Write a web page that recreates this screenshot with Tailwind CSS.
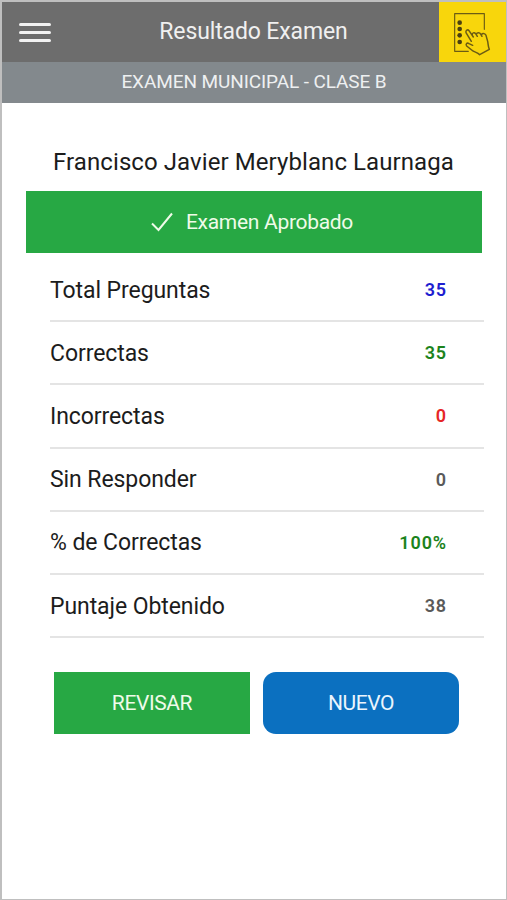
<!DOCTYPE html>
<html lang="es">
<head>
  <meta charset="UTF-8" />
  <meta name="viewport" content="width=device-width, initial-scale=1.0" />
  <title>Resultado Examen</title>
  <script src="https://cdn.jsdelivr.net/npm/@tailwindcss/browser@4"></script>
  <style>
    body {
      font-family: Roboto, 'Liberation Sans', sans-serif;
    }
  </style>
</head>
<body class="bg-white text-[#1c1c1c]">
  <div class="flex flex-col h-[900px] w-[507px] overflow-hidden border-t-2 border-l-2 border-r border-b border-[#bfbfbf]">
    <header class="flex h-[60px] shrink-0 items-center bg-[#6d6d6d]">
      <button class="ml-[17px] flex w-8 flex-col gap-[5px]" aria-label="Menú">
        <span class="h-[3px] w-full rounded-sm bg-[#f2f2f2]"></span>
        <span class="h-[3px] w-full rounded-sm bg-[#f2f2f2]"></span>
        <span class="h-[3px] w-full rounded-sm bg-[#f2f2f2]"></span>
      </button>
      <h1 class="flex-1 pb-0.5 pl-[17px] text-center text-[23px] leading-none tracking-[-0.13px] text-[#f0f0f0]">Resultado Examen</h1>
      <div class="h-full w-[67px] bg-[#f8d60c]">
        <svg class="h-full w-full" viewBox="36 6 201 180" fill="none" stroke="#6b5c14" stroke-width="3.5" stroke-linecap="round" stroke-linejoin="round">
          <path d="M172 88V41H83V154H124" />
          <g fill="#4a400f" stroke="none">
            <circle cx="98" cy="68" r="7" />
            <circle cx="98" cy="87" r="7" />
            <circle cx="98" cy="106" r="7" />
            <circle cx="98" cy="126" r="7" />
          </g>
          <path stroke-width="4.5" d="M133 124L117 98C115 91 122 87 126 92L139 111M136 106C134 98 142 96 146 101L151 109M148 103C150 97 158 97 161 102L165 109M163 104C168 98 175 101 177 106L182 124C184 134 183 139 187 148L158 164C151 156 142 157 134 150L119 138C115 132 120 127 126 131L137 136" />
        </svg>
      </div>
    </header>
    <div class="flex h-[41px] shrink-0 items-center justify-center bg-[#83898d] pb-0.5 text-[19px] leading-none tracking-[-0.1px] text-[#eef0f1]">
      EXAMEN MUNICIPAL - CLASE B
    </div>

    <main class="flex flex-col pr-[23px] pl-6">
      <h2 class="flex h-[88px] items-end justify-center pr-0.5 pb-[13px] text-2xl leading-8 tracking-[0.08px] whitespace-nowrap">Francisco Javier Meryblanc Laurnaga</h2>
      <div class="mr-px flex h-[62px] items-center justify-center gap-3 bg-[#27a844] pr-[5px] text-[21px] leading-none tracking-[-0.3px] text-[#effbe9]">
        <svg class="h-5 w-6" viewBox="0 0 24 20" fill="none" stroke="currentColor" stroke-width="2">
          <path d="M2 11.5L8.5 18L22 1.5" />
        </svg>
        <span>Examen Aprobado</span>
      </div>

      <ul class="ml-6 mr-[-1px] pt-[6px] text-[23px] leading-none tracking-[-0.08px]">
        <li class="flex h-[63.2px] items-center justify-between border-b-2 border-[#e4e4e4] pt-px pr-[37px]">
          <span>Total Preguntas</span>
          <span class="text-lg font-semibold tracking-wider text-[#1e1ed0]">35</span>
        </li>
        <li class="flex h-[63.2px] items-center justify-between border-b-2 border-[#e4e4e4] pt-px pr-[37px]">
          <span>Correctas</span>
          <span class="text-lg font-semibold tracking-wider text-[#1c831c]">35</span>
        </li>
        <li class="flex h-[63.2px] items-center justify-between border-b-2 border-[#e4e4e4] pt-px pr-[37px]">
          <span>Incorrectas</span>
          <span class="text-lg font-semibold tracking-wider text-[#e62626]">0</span>
        </li>
        <li class="flex h-[63.2px] items-center justify-between border-b-2 border-[#e4e4e4] pt-px pr-[37px]">
          <span>Sin Responder</span>
          <span class="text-lg font-semibold tracking-wider text-[#5a5a5a]">0</span>
        </li>
        <li class="flex h-[63.2px] items-center justify-between border-b-2 border-[#e4e4e4] pt-px pr-[37px]">
          <span>% de Correctas</span>
          <span class="text-lg font-semibold tracking-wider text-[#1c831c]">100%</span>
        </li>
        <li class="flex h-[63.2px] items-center justify-between border-b-2 border-[#e4e4e4] pt-px pr-[37px]">
          <span>Puntaje Obtenido</span>
          <span class="text-lg font-semibold tracking-wider text-[#5a5a5a]">38</span>
        </li>
      </ul>

      <div class="mt-[34px] ml-7 flex gap-[13px] text-[21px] leading-none tracking-[-0.4px]">
        <button class="h-[62px] w-[196px] bg-[#27a844] text-[#effbe9]">REVISAR</button>
        <button class="h-[62px] w-[196px] rounded-[13px] bg-[#0b70c0] text-[#eaf5fd]">NUEVO</button>
      </div>
    </main>
  </div>
</body>
</html>
